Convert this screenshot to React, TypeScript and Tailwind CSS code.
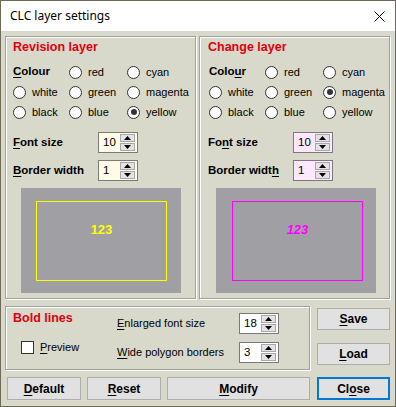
import React from "react";

const U = ({ children }: { children: React.ReactNode }) => (
  <span className="underline underline-offset-[2px] decoration-[1px]">{children}</span>
);

function Radio({ label, checked }: { label: string; checked?: boolean }) {
  return (
    <div className="flex items-center gap-[6px] h-[20px]">
      <span className="w-[13px] h-[13px] rounded-full border border-[#333333] bg-white flex items-center justify-center shrink-0">
        {checked && <span className="w-[6px] h-[6px] rounded-full bg-[#333333]" />}
      </span>
      <span className="text-[11px] text-black">{label}</span>
    </div>
  );
}

function SpinBtn({ up }: { up?: boolean }) {
  return (
    <div className="w-[15px] h-[8px] bg-[#e3e3e3] border border-[#a8a8a8] flex items-center justify-center">
      <svg width="7" height="4" viewBox="0 0 7 4">
        {up ? <path d="M3.5 0 L7 4 L0 4Z" fill="#000" /> : <path d="M0 0 L7 0 L3.5 4Z" fill="#000" />}
      </svg>
    </div>
  );
}

function Spin({ value, bg }: { value: string; bg: string }) {
  return (
    <div className={`w-[40px] h-[21px] border border-[#7a7a7a] flex items-center ${bg}`}>
      <span className="flex-1 pl-[4px] text-[11.5px] text-black">{value}</span>
      <div className="flex flex-col gap-[1px] mr-[2px]">
        <SpinBtn up />
        <SpinBtn />
      </div>
    </div>
  );
}

function Group({
  title,
  colourLabel,
  fontLabel,
  borderLabel,
  selected,
  spinBg,
  previewBox,
  previewText,
  pad,
  radioPad,
  previewPad,
}: {
  title: string;
  colourLabel: React.ReactNode;
  fontLabel: React.ReactNode;
  borderLabel: React.ReactNode;
  selected: string;
  spinBg: string;
  previewBox: string;
  previewText: string;
  pad: string;
  radioPad: string;
  previewPad: string;
}) {
  return (
    <div className={`w-[191px] h-[263px] border border-[#a0a0a0] shadow-[inset_1px_1px_0_#ffffff,1px_1px_0_#ffffff] flex flex-col ${pad}`}>
      <div className="h-[20px] flex items-center text-[12.5px] font-bold text-[#e00010]">{title}</div>
      <div className={`grid grid-cols-[56px_58px_1fr] mt-[5px] ${radioPad}`}>
        <div className="h-[20px] flex items-center text-[11.5px] font-bold text-black">{colourLabel}</div>
        <Radio label="red" checked={selected === "red"} />
        <Radio label="cyan" checked={selected === "cyan"} />
        <Radio label="white" checked={selected === "white"} />
        <Radio label="green" checked={selected === "green"} />
        <Radio label="magenta" checked={selected === "magenta"} />
        <Radio label="black" checked={selected === "black"} />
        <Radio label="blue" checked={selected === "blue"} />
        <Radio label="yellow" checked={selected === "yellow"} />
      </div>
      <div className="flex items-center mt-[10px]">
        <div className="w-[85px] text-[11.5px] font-bold text-black">{fontLabel}</div>
        <Spin value="10" bg={spinBg} />
      </div>
      <div className="flex items-center mt-[7px]">
        <div className="w-[85px] text-[11.5px] font-bold text-black">{borderLabel}</div>
        <Spin value="1" bg={spinBg} />
      </div>
      <div className={`mt-[7px] ml-[8px] w-[160px] h-[105px] bg-[#a0a0a4] pt-[13px] ${previewPad}`}>
        <div className={`w-[131px] h-[80px] flex justify-center pt-[20px] ${previewBox}`}>
          <span className={`text-[13px] font-bold leading-[16px] h-[16px] ${previewText}`}>123</span>
        </div>
      </div>
    </div>
  );
}

function Btn({ children, w, focused }: { children: React.ReactNode; w: string; focused?: boolean }) {
  return (
    <div
      className={`${w} h-full bg-[#e1e1e1] flex items-center justify-center text-[12px] font-bold text-black ${
        focused ? "border-2 border-[#0078d7]" : "border border-[#adadad]"
      }`}
    >
      {children}
    </div>
  );
}

export default function App() {
  return (
    <div className="w-[396px] h-[407px] bg-[#d8d8cb] border border-[#6f6a55] flex flex-col overflow-hidden font-['Liberation_Sans',Arial,sans-serif]">
      <div className="h-[30px] bg-white flex items-center justify-between pl-[9px] pr-[10px] shrink-0">
        <span className="text-[12px] text-black font-['Noto_Sans',sans-serif]">CLC layer settings</span>
        <svg width="11" height="11" viewBox="0 0 11 11">
          <path d="M0.5 0.5 L10.5 10.5 M10.5 0.5 L0.5 10.5" stroke="#000" strokeWidth="1" />
        </svg>
      </div>

      <div className="flex pl-[4px] gap-[3px] mt-[5px]">
        <Group
          title="Revision layer"
          colourLabel={<><U>C</U>olour</>}
          fontLabel={<><U>F</U>ont size</>}
          borderLabel={<><U>B</U>order width</>}
          selected="yellow"
          spinBg="bg-[#fffbe6]"
          previewBox="border border-[#ffff00]"
          previewText="text-[#ffff00]"
          pad="pl-[7px]"
          radioPad=""
          previewPad="pl-[15px]"
        />
        <Group
          title="Change layer"
          colourLabel={<>Colo<U>u</U>r</>}
          fontLabel={<>Fo<U>n</U>t size</>}
          borderLabel={<>Border widt<U>h</U></>}
          selected="magenta"
          spinBg="bg-[#fde8fd]"
          previewBox="border border-[#ff00ff]"
          previewText="text-[#ff00ff] italic"
          pad="pl-[8px]"
          radioPad="pl-[1px]"
          previewPad="pl-[16px]"
        />
      </div>

      <div className="flex pl-[4px] mt-[7px]">
        <div className="w-[305px] h-[64px] border border-[#a0a0a0] shadow-[inset_1px_1px_0_#ffffff,1px_1px_0_#ffffff] flex">
          <div className="w-[111px] pl-[7px] flex flex-col">
            <div className="h-[20px] mt-[1px] flex items-center text-[12.5px] font-bold text-[#e00010]">Bold lines</div>
            <div className="flex items-center mt-[11px] pl-[8px] gap-[6px]">
              <span className="w-[13px] h-[13px] border border-[#333333] bg-white shrink-0" />
              <span className="text-[11px] text-black"><U>P</U>review</span>
            </div>
          </div>
          <div className="flex flex-col pt-[6px] gap-[8px]">
            <div className="flex items-center h-[21px]">
              <div className="w-[122px] text-[11px] text-black"><U>E</U>nlarged font size</div>
              <Spin value="18" bg="bg-white" />
            </div>
            <div className="flex items-center h-[21px]">
              <div className="w-[122px] text-[11px] text-black"><U>W</U>ide polygon borders</div>
              <Spin value="3" bg="bg-white" />
            </div>
          </div>
        </div>
        <div className="ml-[7px] flex flex-col pt-[2px]">
          <div className="h-[22px]">
            <Btn w="w-[73px]"><U>S</U>ave</Btn>
          </div>
          <div className="h-[22px] mt-[13px]">
            <Btn w="w-[73px]"><U>L</U>oad</Btn>
          </div>
        </div>
      </div>

      <div className="flex pl-[6px] mt-[7px] h-[23px]">
        <Btn w="w-[74px]"><U>D</U>efault</Btn>
        <div className="ml-[6px] h-full"><Btn w="w-[74px]"><U>R</U>eset</Btn></div>
        <div className="ml-[6px] h-full"><Btn w="w-[143px]"><U>M</U>odify</Btn></div>
        <div className="ml-[7px] h-full"><Btn w="w-[73px]" focused>Cl<U>o</U>se</Btn></div>
      </div>
    </div>
  );
}
